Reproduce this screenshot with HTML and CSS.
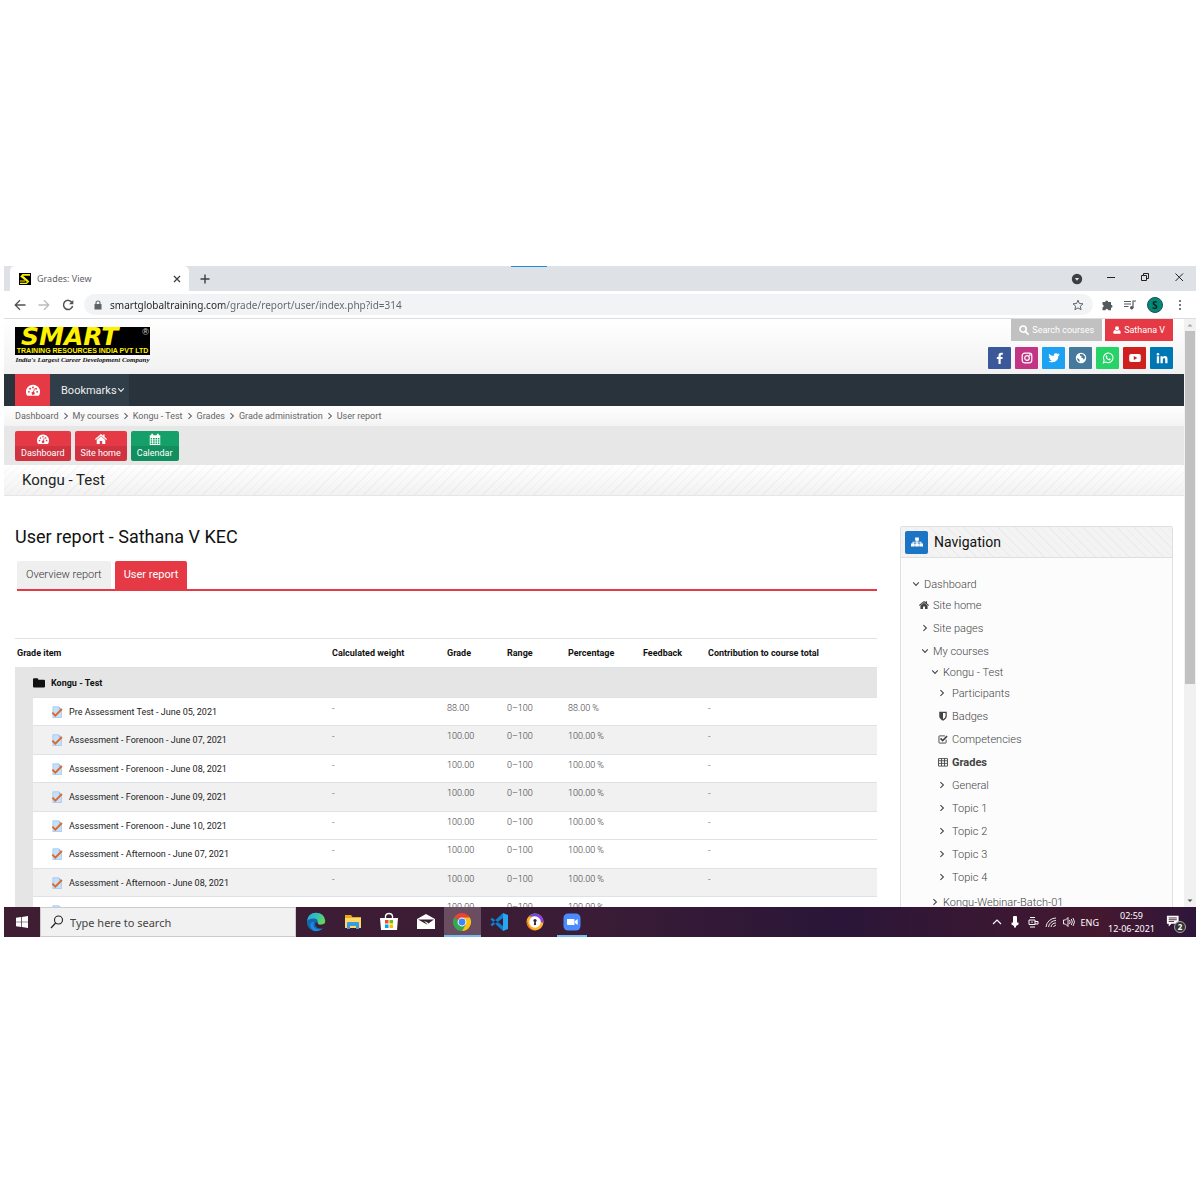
FILE: index.html
```html
<!DOCTYPE html>
<html lang="en">
<head>
<meta charset="utf-8">
<title>Grades: View</title>
<link rel="stylesheet" href="styles.css">
</head>
<body>
<svg class="sprite" aria-hidden="true">
  <symbol id="gauge" viewBox="0 0 16 16"><path fill-rule="evenodd" d="M8 2a8 8 0 0 0-6.800 12.200q.2.300.6.300h12.400q.4 0 .6-.3A8 8 0 0 0 8 2zM3.300 9a1.100 1.100 0 1 1 0 2.200a1.100 1.100 0 0 1 0-2.200zM4.700 5.500a1.100 1.100 0 1 1 0 2.200a1.100 1.100 0 0 1 0-2.200zM8 3.900a1.100 1.100 0 1 1 0 2.200a1.100 1.100 0 0 1 0-2.200zM11.500 5.500a1.100 1.100 0 1 1 0 2.200a1.100 1.100 0 0 1 0-2.200zM12.800 9a1.100 1.100 0 1 1 0 2.200a1.100 1.100 0 0 1 0-2.200zM9.200 6.200l.9.300-1 3.800a1.700 1.700 0 1 1-.9-.3z"/></symbol>
  <symbol id="home" viewBox="0 0 16 16"><path d="M8 4.300l5.700 4.900V14.500H9.600v-4H6.400v4H2.300V9.200zM8 1.400l2.800 2.300V2.100h2v3.300L16 8.100l-1 1.300L8 3.500 1 9.400 0 8.100z"/></symbol>
  <symbol id="calendar" viewBox="0 0 16 16"><path fill-rule="evenodd" d="M1 3h2V1h2.500v2h5V1H13v2h2v13H1zM2.200 6.500v2h2v-2zm3.200 0v2h2.200v-2zm3.300 0v2h2.200v-2zm3.300 0v2h1.900v-2zM2.200 9.600v2h2v-2zm3.200 0v2h2.200v-2zm3.300 0v2h2.200v-2zm3.300 0v2h1.900v-2zM2.200 12.700v2.100h2v-2.100zm3.200 0v2.100h2.200v-2.100zm3.300 0v2.100h2.200v-2.100zm3.300 0v2.100h1.900v-2.100z"/></symbol>
  <symbol id="search" viewBox="0 0 16 16"><circle cx="6.500" cy="6.500" r="5" fill="none" stroke="currentColor" stroke-width="2.600"/><path d="M10.500 10.500l4 4" stroke="currentColor" stroke-width="3" stroke-linecap="round"/></symbol>
  <symbol id="user" viewBox="0 0 16 16"><circle cx="8" cy="4.500" r="4"/><path d="M4 8q4 2.500 8 0 3.500 .5 3.500 5.500 0 2-2 2h-11q-2 0-2-2 0-5 3.500-5.500z"/></symbol>
  <symbol id="chev-r" viewBox="0 0 10 10"><path d="M3 1.500L6.800 5 3 8.500" fill="none" stroke="currentColor" stroke-width="1.300"/></symbol>
  <symbol id="chev-d" viewBox="0 0 10 10"><path d="M1.500 3L5 6.800 8.500 3" fill="none" stroke="currentColor" stroke-width="1.300"/></symbol>
  <symbol id="folder" viewBox="0 0 16 16"><path d="M0 3q0-1.500 1.500-1.500h4Q7 1.500 7 3v.5h7.500Q16 3.500 16 5v7.500q0 1.500-1.500 1.500h-13Q0 14 0 12.500z"/></symbol>
  <symbol id="quiz" viewBox="0 0 16 16"><path d="M2.500 1h8l3.500 3.500V15.500H2.500z" fill="#c5e0f8" stroke="#8dbdf0" stroke-width=".8"/><path d="M10.500 1v3.500H14z" fill="#8dbdf0"/><path d="M1.800 8.800l4 4L14.500 4" fill="none" stroke="#e0682a" stroke-width="2.600"/></symbol>
  <symbol id="sitemap" viewBox="0 0 16 16"><path d="M5.500 2h5v4.200H8.800v1.300h5.200V10H16v4h-5v-4h1.600V8.800H8.800V10h1.700v4h-5v-4h1.700V8.800H3.400V10H5v4H0v-4h2V7.500h5.200V6.200H5.500z"/></symbol>
  <symbol id="shield" viewBox="0 0 16 16"><path fill-rule="evenodd" d="M2 1h12v7.500q0 4-6 7-6-3-6-7zM8 3v10.200q4-2.200 4-4.700V3z"/></symbol>
  <symbol id="check-sq" viewBox="0 0 16 16"><path d="M13 9v4.500q0 1-1 1H2.500q-1 0-1-1V4q0-1 1-1H11" fill="none" stroke="currentColor" stroke-width="1.500"/><path d="M4 7l3.500 3.500L14.500 3.500" fill="none" stroke="currentColor" stroke-width="2.600"/></symbol>
  <symbol id="grid" viewBox="0 0 16 16"><path d="M.8 2.500h14.400v12H.8zM.8 6h14.400M.8 10.200h14.400M5.600 2.500v12M10.400 2.500v12" fill="none" stroke="currentColor" stroke-width="1.400"/></symbol>
</svg>

<div class="desktop">
  <div class="progress"></div>
  <header class="tabstrip">
    <div class="tab">
      <svg class="favicon" viewBox="0 0 12 12"><path d="M0 0h12v12H0z" fill="#000"/><path d="M11 1.800H4L2.500 3.500l6 4.800" fill="none" stroke="#fff200" stroke-width="1.800"/><path d="M1 10.300h6.500l2-1.800L4 3.500M1 8h5" fill="none" stroke="#fff200" stroke-width="1.200"/></svg>
      <span class="tab-title">Grades: View</span>
      <button class="plain" aria-label="Close tab"><svg class="i8" viewBox="0 0 8 8"><path d="M1 1l6 6M7 1L1 7" stroke="#3c4043" stroke-width="1.300"/></svg></button>
    </div>
    <button class="plain newtab" aria-label="New tab"><svg class="i10" viewBox="0 0 10 10"><path d="M5 .5v9M.5 5h9" stroke="#3c4043" stroke-width="1.400"/></svg></button>
    <div class="win-controls">
      <button class="plain" aria-label="Search tabs"><svg class="i12" viewBox="0 0 12 12"><circle cx="6" cy="6" r="5.200" fill="#3c4043"/><path d="M3.800 5h4.400L6 7.800z" fill="#dee1e6"/></svg></button>
      <button class="plain" aria-label="Minimize"><svg class="i12" viewBox="0 0 12 12"><path d="M2 4.500h8" stroke="#222"/></svg></button>
      <button class="plain" aria-label="Restore"><svg class="i12" viewBox="0 0 12 12"><path d="M2.500 2.500h5v5h-5zM4.500 2.500v-2h5v5h-2" fill="none" stroke="#222"/></svg></button>
      <button class="plain" aria-label="Close"><svg class="i12" viewBox="0 0 12 12"><path d="M2.500.5l7.500 7.500M10 .5L2.500 8" stroke="#222"/></svg></button>
    </div>
  </header>

  <div class="toolbar">
    <button class="plain" aria-label="Back"><svg class="i12" viewBox="0 0 12 12"><path d="M11.500 6H1.500M6 1.200L1.200 6 6 10.800" fill="none" stroke="#4f5357" stroke-width="1.300"/></svg></button>
    <button class="plain" aria-label="Forward"><svg class="i12" viewBox="0 0 12 12"><path d="M.5 6h10M6 1.200L10.800 6 6 10.800" fill="none" stroke="#babcbe" stroke-width="1.300"/></svg></button>
    <button class="plain" aria-label="Reload"><svg class="i12" viewBox="0 0 12 12"><path d="M10 3.500A4.600 4.600 0 1 0 10.600 7" fill="none" stroke="#4f5357" stroke-width="1.500"/><path d="M11.300 1v4.300H7z" fill="#4f5357"/></svg></button>
    <div class="omnibox">
      <svg class="i10" viewBox="0 0 10 10"><path d="M1.500 4h7v5.500h-7z" fill="#5f6368"/><path d="M3 4.500V3a2 2 0 0 1 4 0v1.500" fill="none" stroke="#5f6368" stroke-width="1.100"/></svg>
      <input class="url" type="text" aria-label="Address" value="smartglobaltraining.com/grade/report/user/index.php?id=314">
      <button class="plain" aria-label="Bookmark"><svg class="i12" viewBox="0 0 12 12"><path d="M6 1.200l1.400 3.300 3.600.3-2.700 2.400.8 3.500L6 8.900l-3.100 1.800.8-3.500L1 4.800l3.600-.3z" fill="none" stroke="#5f6368"/></svg></button>
    </div>
    <div class="tools">
      <button class="plain" aria-label="Extensions"><svg class="i12" viewBox="0 0 12 12"><path d="M1.500 3h2.700a1.500 1.500 0 1 1 3 0H10v2.700a1.500 1.500 0 1 1 0 3v2.600H7.400a1.600 1.600 0 0 0-3.100 0H1.500V8.500a1.500 1.500 0 0 0 0-2.900z" fill="#55595d"/></svg></button>
      <button class="plain" aria-label="Media"><svg class="i12" viewBox="0 0 12 12"><path d="M0 2.500h7M0 5h7M0 7.500h4.500M9 9V2h3" fill="none" stroke="#55595d" stroke-width="1.200"/><circle cx="7.700" cy="8.800" r="1.700" fill="#55595d"/></svg></button>
      <button class="avatar" aria-label="Profile">S</button>
      <button class="plain" aria-label="Menu"><svg class="i12" viewBox="0 0 12 12" fill="#55595d"><circle cx="6" cy="2" r="1.100"/><circle cx="6" cy="6" r="1.100"/><circle cx="6" cy="10" r="1.100"/></svg></button>
    </div>
  </div>

  <div class="viewport">
    <div class="page">
      <div class="masthead">
        <a class="logo" href="#">
          <span class="logo-box"><span class="logo-name">SMART<sup>®</sup></span><span class="logo-sub">TRAINING RESOURCES INDIA PVT LTD</span></span>
          <span class="logo-tag">India's Largest Career Development Company</span>
        </a>
        <div class="head-right">
          <div class="head-links">
            <a class="chip chip-grey" href="#"><svg class="i10"><use href="#search"/></svg>Search courses</a>
            <a class="chip chip-red" href="#"><svg class="i8"><use href="#user"/></svg>Sathana V</a>
          </div>
          <div class="social">
            <a class="fb" href="#" aria-label="Facebook"><svg viewBox="0 0 12 12"><path d="M8.800.8v2H7.600q-.9 0-.9.900v1.200h2L8.400 7H6.700v5H4.500V7H2.800V4.900h1.700V3.400Q4.500.7 7.200.7z" fill="#fff"/></svg></a>
            <a class="ig" href="#" aria-label="Instagram"><svg viewBox="0 0 12 12" fill="none" stroke="#fff" stroke-width="1.200"><rect x="1.200" y="1.200" width="9.600" height="9.600" rx="2.500"/><circle cx="6" cy="6" r="2.300"/><circle cx="8.800" cy="3.200" r=".3"/></svg></a>
            <a class="tw" href="#" aria-label="Twitter"><svg viewBox="0 0 12 12"><path d="M11.600 2.700q-.5.700-1.200 1.200 0 3-2.300 5Q6 10.500 3.400 10.300 1.700 10.200.3 9.300q1.900.1 3.300-.9-1.600-.2-2.100-1.600h1Q.7 6.200.7 4.400q.5.300 1 .3Q.1 3.400 1 1.700q2 2.300 4.800 2.400-.4-1.600.8-2.500 1.800-1 3 .3.800-.2 1.500-.6-.3.800-1 1.300.8-.1 1.500-.4z" fill="#fff"/></svg></a>
            <a class="web" href="#" aria-label="Website"><svg viewBox="0 0 12 12"><circle cx="6" cy="6" r="5.200" fill="#fff"/><path d="M5 2l3 .3 2 2.400-.3 2-1 1-.8-1.600L6 5.500l.8-1.200L5 3.500zM2 6l2 1 .7 1.500-.5 1.400L2.500 8z" fill="#467a9c"/></svg></a>
            <a class="wa" href="#" aria-label="WhatsApp"><svg viewBox="0 0 12 12"><path d="M1.300 10.800l.8-2.500a4.800 4.800 0 1 1 1.700 1.700z" fill="none" stroke="#fff" stroke-width="1.100"/><path d="M4 3.500l.8-.2.700 1.500-.5.700q.6 1.100 1.700 1.500l.7-.7 1.400.8q0 1.300-1.500 1.300Q4 7.700 3.600 4.600z" fill="#fff"/></svg></a>
            <a class="yt" href="#" aria-label="YouTube"><svg viewBox="0 0 12 12"><path fill-rule="evenodd" d="M2 2h8q1.800 0 1.800 1.800v4.400Q11.800 10 10 10H2Q.2 10 .2 8.200V3.800Q.2 2 2 2zm2.800 2v4l3.500-2z" fill="#fff"/></svg></a>
            <a class="li" href="#" aria-label="LinkedIn"><svg viewBox="0 0 12 12" fill="#fff"><path d="M.8 4.300h2.300v6.900H.8zM4.500 4.300h2.200v1q.7-1.200 2.200-1.200 2.600 0 2.600 3v4.100H9.200V7.500q0-1.500-1.100-1.500-1.300 0-1.300 1.600v3.600H4.500z"/><circle cx="1.950" cy="2.200" r="1.300"/></svg></a>
          </div>
        </div>
      </div>

      <nav class="mainnav" aria-label="Main">
        <a class="nav-home" href="#" aria-label="Dashboard"><svg class="i14"><use href="#gauge"/></svg></a>
        <button class="nav-item">Bookmarks<svg class="i8"><use href="#chev-d"/></svg></button>
      </nav>

      <nav class="crumbs" aria-label="Breadcrumb">
        <a href="#">Dashboard</a><svg class="i8"><use href="#chev-r"/></svg><a href="#">My courses</a><svg class="i8"><use href="#chev-r"/></svg><a href="#">Kongu - Test</a><svg class="i8"><use href="#chev-r"/></svg><a href="#">Grades</a><svg class="i8"><use href="#chev-r"/></svg><a href="#">Grade administration</a><svg class="i8"><use href="#chev-r"/></svg><a href="#">User report</a>
      </nav>

      <div class="quick">
        <a class="tile red" href="#"><svg class="i12"><use href="#gauge"/></svg><span>Dashboard</span></a>
        <a class="tile red" href="#"><svg class="i12"><use href="#home"/></svg><span>Site home</span></a>
        <a class="tile green" href="#"><svg class="i12"><use href="#calendar"/></svg><span>Calendar</span></a>
      </div>

      <h1 class="course">Kongu - Test</h1>

      <div class="columns">
        <main>
          <h2>User report - Sathana V KEC</h2>
          <nav class="tabs" aria-label="Reports"><a href="#">Overview report</a><a class="active" href="#">User report</a></nav>
          <table class="grades">
            <colgroup><col class="c-pad"><col class="c-item"><col class="c-weight"><col class="c-grade"><col class="c-range"><col class="c-pct"><col class="c-fb"><col></colgroup>
            <thead><tr><th colspan="2">Grade item</th><th>Calculated weight</th><th>Grade</th><th>Range</th><th>Percentage</th><th>Feedback</th><th>Contribution to course total</th></tr></thead>
            <tbody>
              <tr class="cat"><td></td><th colspan="7"><span class="item"><svg class="i12"><use href="#folder"/></svg>Kongu - Test</span></th></tr>
              <tr><td class="gut"></td><td><a class="item" href="#"><svg class="i12"><use href="#quiz"/></svg>Pre Assessment Test - June 05, 2021</a></td><td>-</td><td>88.00</td><td>0–100</td><td>88.00 %</td><td></td><td>-</td></tr>
              <tr class="alt"><td class="gut"></td><td><a class="item" href="#"><svg class="i12"><use href="#quiz"/></svg>Assessment - Forenoon - June 07, 2021</a></td><td>-</td><td>100.00</td><td>0–100</td><td>100.00 %</td><td></td><td>-</td></tr>
              <tr><td class="gut"></td><td><a class="item" href="#"><svg class="i12"><use href="#quiz"/></svg>Assessment - Forenoon - June 08, 2021</a></td><td>-</td><td>100.00</td><td>0–100</td><td>100.00 %</td><td></td><td>-</td></tr>
              <tr class="alt"><td class="gut"></td><td><a class="item" href="#"><svg class="i12"><use href="#quiz"/></svg>Assessment - Forenoon - June 09, 2021</a></td><td>-</td><td>100.00</td><td>0–100</td><td>100.00 %</td><td></td><td>-</td></tr>
              <tr><td class="gut"></td><td><a class="item" href="#"><svg class="i12"><use href="#quiz"/></svg>Assessment - Forenoon - June 10, 2021</a></td><td>-</td><td>100.00</td><td>0–100</td><td>100.00 %</td><td></td><td>-</td></tr>
              <tr><td class="gut"></td><td><a class="item" href="#"><svg class="i12"><use href="#quiz"/></svg>Assessment - Afternoon - June 07, 2021</a></td><td>-</td><td>100.00</td><td>0–100</td><td>100.00 %</td><td></td><td>-</td></tr>
              <tr class="alt"><td class="gut"></td><td><a class="item" href="#"><svg class="i12"><use href="#quiz"/></svg>Assessment - Afternoon - June 08, 2021</a></td><td>-</td><td>100.00</td><td>0–100</td><td>100.00 %</td><td></td><td>-</td></tr>
              <tr><td class="gut"></td><td><a class="item" href="#" aria-label="Assessment"><svg class="i12"><use href="#quiz"/></svg></a></td><td></td><td>100.00</td><td>0–100</td><td>100.00 %</td><td></td><td></td></tr>
            </tbody>
          </table>
        </main>

        <aside class="block">
          <h3><span class="block-icon"><svg class="i12"><use href="#sitemap"/></svg></span>Navigation</h3>
          <ul class="tree">
            <li class="short"><a href="#"><svg class="i8"><use href="#chev-d"/></svg>Dashboard</a></li>
            <li class="l1"><a href="#"><svg class="i10"><use href="#home"/></svg>Site home</a></li>
            <li class="l1 fold"><a href="#"><svg class="i8"><use href="#chev-r"/></svg>Site pages</a></li>
            <li class="l1 fold short"><a href="#"><svg class="i8"><use href="#chev-d"/></svg>My courses</a></li>
            <li class="l2 short"><a href="#"><svg class="i8"><use href="#chev-d"/></svg>Kongu - Test</a></li>
            <li class="l3 fold"><a href="#"><svg class="i8"><use href="#chev-r"/></svg>Participants</a></li>
            <li class="l3"><a href="#"><svg class="i10"><use href="#shield"/></svg>Badges</a></li>
            <li class="l3"><a href="#"><svg class="i10"><use href="#check-sq"/></svg>Competencies</a></li>
            <li class="l3 here"><a href="#"><svg class="i10"><use href="#grid"/></svg>Grades</a></li>
            <li class="l3 fold"><a href="#"><svg class="i8"><use href="#chev-r"/></svg>General</a></li>
            <li class="l3 fold"><a href="#"><svg class="i8"><use href="#chev-r"/></svg>Topic 1</a></li>
            <li class="l3 fold"><a href="#"><svg class="i8"><use href="#chev-r"/></svg>Topic 2</a></li>
            <li class="l3 fold"><a href="#"><svg class="i8"><use href="#chev-r"/></svg>Topic 3</a></li>
            <li class="l3 fold"><a href="#"><svg class="i8"><use href="#chev-r"/></svg>Topic 4</a></li>
            <li class="l2 last"><a href="#"><svg class="i8"><use href="#chev-r"/></svg>Kongu-Webinar-Batch-01</a></li>
          </ul>
        </aside>
      </div>
    </div>
    <div class="scrollbar" aria-hidden="true">
      <svg viewBox="0 0 12 12"><path d="M3.500 7.500h5L6 5z" fill="#a3a3a3"/></svg>
      <div class="thumb"></div>
      <svg class="down" viewBox="0 0 12 12"><path d="M3.500 4.500h5L6 7z" fill="#505050"/></svg>
    </div>
  </div>

  <footer class="taskbar">
    <button class="start" aria-label="Start"><svg class="i12" viewBox="0 0 12 12" fill="#fff"><path d="M0 1.800l5.300-.8v4.700H0zM6 .9L12 0v5.700H6zM0 6.300h5.300V11L0 10.200zM6 6.300h6V12l-6-.9z"/></svg></button>
    <label class="search"><svg class="i14" viewBox="0 0 14 14"><circle cx="8.500" cy="5" r="4" fill="none" stroke="#222" stroke-width="1.100"/><path d="M5.600 8L1 13" stroke="#222" stroke-width="1.200"/></svg><input type="text" placeholder="Type here to search" aria-label="Type here to search"></label>
    <div class="apps">
      <button aria-label="Edge"><svg viewBox="0 0 20 20"><defs><linearGradient id="eg" x1="0" y1="0" x2="1" y2=".4"><stop offset="0" stop-color="#28a8d8"/><stop offset=".6" stop-color="#35c3b3"/><stop offset="1" stop-color="#62d657"/></linearGradient></defs><circle cx="10" cy="10" r="9.200" fill="#1267b4"/><path d="M1 9Q2 1 10 .8q8 .2 9.200 7.700.2 4.300-4.700 4.300-3 0-2.800-2 .7-3.400-3-4.300Q3 6 1 9z" fill="url(#eg)"/><path d="M8 10q-2 5 2.500 7 4 1 6.800-1Q13 20.500 7.500 18.500 3.500 16 4.500 12 5.500 9.800 8 10z" fill="#1a8ce0"/><path d="M11.700 10.800q-.2 2 2.800 2 2.400 0 3.800-1.200l1 1.400-1.800 3q-5.500 1.800-8-2-.7-2 .3-3.800z" fill="#3c1d33"/></svg></button>
      <button aria-label="File Explorer"><svg viewBox="0 0 20 20"><path d="M2 3h6l1.500 2H18v11H2z" fill="#e9a820"/><path d="M2 6h16v10H2z" fill="#ffd968"/><path d="M5 10h10q1 0 1 1v6h-3v-3H7v3H4v-6q0-1 1-1z" fill="#3c9be0"/></svg></button>
      <button aria-label="Store"><svg viewBox="0 0 20 20"><path d="M1 6h18l-1 12H2z" fill="#fff"/><path d="M6.500 6V4Q7 1.500 10 1.500T13.500 4v2" fill="none" stroke="#fff" stroke-width="1.300"/><path d="M6 8h3.500v3.500H6z" fill="#f25022"/><path d="M10.500 8H14v3.500h-3.500z" fill="#7fba00"/><path d="M6 12.500h3.500V16H6z" fill="#00a4ef"/><path d="M10.500 12.500H14V16h-3.500z" fill="#ffb900"/></svg></button>
      <button aria-label="Mail"><svg viewBox="0 0 20 20"><path d="M1 7l9-5 9 5v10H1z" fill="#fff"/><path d="M2 7.500h16l-7 5z" fill="#3c1d33"/><path d="M8 9l3 3 3 2.500-2.500-4z" fill="#fff"/></svg></button>
      <button class="open current" aria-label="Chrome"><svg viewBox="0 0 20 20"><path d="M10 10L2.200 5.500A9 9 0 0 1 17.800 5.500z" fill="#ea4335"/><path d="M2.200 5.500A9 9 0 0 0 10 19l4-6.700L10 10z" fill="#34a853"/><path d="M17.800 5.500A9 9 0 0 1 10 19l4-7-2-6.500z" fill="#fbc116"/><circle cx="10" cy="10" r="4.400" fill="#fff"/><circle cx="10" cy="10" r="3.400" fill="#4285f4"/></svg></button>
      <button aria-label="Visual Studio Code"><svg viewBox="0 0 20 20"><path d="M14 1l5 2v14l-5 2z" fill="#2aa5f0"/><path d="M14 1L1.500 12.500 3 14.300 14 6zM14 19L1.500 7.500 3 5.700 14 14z" fill="#0f7fcc"/></svg></button>
      <button aria-label="Secure browser"><svg viewBox="0 0 20 20"><circle cx="10" cy="10" r="8.500" fill="#fdb52a"/><path d="M10 1.500a8.500 8.500 0 0 1 8.400 9.500L10 8z" fill="#8a3ff0"/><path d="M3.500 4.500A8.500 8.500 0 0 1 10 1.500l4 3z" fill="#5a4ee8"/><path d="M2 7q1 10 8 11.500Q1 18 2 7z" fill="#f25a22"/><circle cx="10" cy="10" r="5.800" fill="#fff"/><circle cx="10" cy="8.500" r="1.600" fill="#33243c"/><path d="M9.300 9h1.400l.4 4H8.900z" fill="#33243c"/></svg></button>
      <button class="open" aria-label="Zoom"><svg viewBox="0 0 20 20"><rect x="1.500" y="1.500" width="17" height="17" rx="4.500" fill="#4a8cff"/><path d="M5 7h6.500q1 0 1 1v5H6q-1 0-1-1zM13 9l2.700-2v6L13 11z" fill="#fff"/></svg></button>
    </div>
    <div class="tray">
      <svg class="i12" viewBox="0 0 12 12"><path d="M2 8l4-4 4 4" fill="none" stroke="#fff" stroke-width="1.100"/></svg>
      <svg class="i12" viewBox="0 0 12 12" fill="#fff"><rect x="4" y="0" width="4" height="8" rx="1"/><path d="M2.500 6.500h7v2L7 10v1.500H5V10L2.500 8.500z"/></svg>
      <svg class="i12" viewBox="0 0 12 12" fill="none" stroke="#fff"><path d="M3 1.500h5M2 4h6v4.500H2zM8 5.500h3V8H8M3 11h5M5 5.500v1.500"/></svg>
      <svg class="i12" viewBox="0 0 12 12" fill="none" stroke="#fff" stroke-width=".9"><path d="M1 11A10 10 0 0 1 11 2M3.500 11A7.500 7.500 0 0 1 11 4.500M6 11a5 5 0 0 1 5-4M8.500 11q.5-1.500 2.500-1.800"/></svg>
      <svg class="i12" viewBox="0 0 12 12" fill="none" stroke="#fff" stroke-width=".9"><path d="M.5 4h2L5 1.500v9L2.500 8h-2zM6.500 4q1.300 2 0 4M8.300 3q2 3 0 6M10 2q3 4 0 8"/></svg>
      <span class="lang">ENG</span>
      <span class="clock"><time>02:59</time><time>12-06-2021</time></span>
      <span class="notes"><svg viewBox="0 0 20 20"><path d="M1 3h13v9H6l-3 3v-3H1z" fill="#fff"/><path d="M3 5.500h9M3 7.500h9M3 9.500h6" stroke="#3c1d33"/></svg><b>2</b></span>
    </div>
  </footer>
</div>
</body>
</html>
```
FILE: styles.css
```css
* { box-sizing: border-box; }
body { margin: 0; padding: 266px 4px 0; background: #fff; font-family: Roboto, "Liberation Sans", sans-serif; font-weight: 300; color: #333; }
a { color: inherit; text-decoration: none; }
button { font: inherit; color: inherit; border: 0; padding: 0; margin: 0; background: none; display: flex; align-items: center; justify-content: center; }
input { border: 0; padding: 0; margin: 0; background: none; font: inherit; min-width: 0; }
svg { display: block; flex: none; }
svg:not([fill]) { fill: currentColor; }
.sprite { display: none; }
.i8 { width: 8px; height: 8px; }
.i10 { width: 10px; height: 10px; }
.i12 { width: 12px; height: 12px; }
.i14 { width: 14px; height: 14px; }

.desktop { position: relative; display: flex; flex-direction: column; aspect-ratio: 1192 / 671; }
.progress { position: absolute; top: 0; left: 507px; width: 36px; height: 1px; background: #1c8fe0; }

/* Browser frame */
.tabstrip, .toolbar, .taskbar { font-family: "Noto Sans", "Open Sans", sans-serif; font-weight: 400; }
.tabstrip { flex: none; display: flex; align-items: center; height: 25px; padding-left: 6px; background: #dee1e6; }
.tab { display: flex; align-items: center; align-self: stretch; width: 179px; padding: 0 8px 0 9px; background: #fff; border-radius: 5px 5px 0 0; font-size: 9px; color: #5f6368; }
.favicon { width: 12px; height: 12px; margin-right: 6px; }
.tab-title { flex: 1; }
.newtab { margin-left: 11px; }
.win-controls { margin-left: auto; display: flex; gap: 22px; padding-right: 11px; }
.toolbar { flex: none; display: flex; align-items: center; height: 28px; padding: 0 10px; gap: 12px; border-bottom: 1px solid #dcdde0; }
.omnibox { flex: 1; display: flex; align-items: center; height: 21px; margin-left: -2px; padding: 0 9px 0 9px; gap: 7px; border-radius: 11px; background: #f1f3f4; }
.url { flex: 1; font-size: 10px; color: transparent; background: linear-gradient(90deg, #202124 115px, #5f6368 115px); -webkit-background-clip: text; background-clip: text; }
.tools { display: flex; align-items: center; gap: 11px; margin-left: -4px; }
.avatar { width: 16px; height: 16px; border-radius: 50%; background: #00897b; border: 1px solid #1d4f49; color: #10201e; font-size: 10px; font-weight: 700; }

.viewport { flex: 1; min-height: 0; display: flex; overflow: hidden; }
.page { flex: 1; min-width: 0; }
.scrollbar { width: 12px; display: flex; flex-direction: column; background: #f1f1f1; }
.thumb { flex: 0 0 60%; margin: 0 1px; background: #c1c1c1; }
.down { margin-top: auto; }

/* Site header */
.masthead { display: flex; justify-content: space-between; height: 55px; padding: 0 11px; background: linear-gradient(#fff, #f1f1f1); }
.logo { margin-top: 8px; width: 135px; color: #111; white-space: nowrap; }
.logo-box { display: flex; flex-direction: column; height: 28px; background: #000; color: #fff200; }
.logo-name { display: flex; justify-content: space-between; padding: 0 1px 0 6px; font: italic 700 25px/20px "DejaVu Sans", sans-serif; }
.logo-name sup { font: 400 9px/10px "Liberation Sans", sans-serif; color: #ddd; }
.logo-sub { font: 700 7px/8px "Liberation Sans", sans-serif; text-align: center; }
.logo-tag { display: block; font: italic 700 7px/10px "Liberation Serif", serif; text-align: center; }
.head-right { display: flex; flex-direction: column; align-items: flex-end; gap: 6px; }
.head-links { display: flex; gap: 3px; }
.chip { display: flex; align-items: center; gap: 3px; height: 22px; padding: 0 8px; color: #fff; font-size: 9px; font-weight: 400; }
.chip-grey { background: #c1c1c1; }
.chip-red { background: #e63946; }
.social { display: flex; gap: 4px; }
.social a { display: grid; place-items: center; width: 23px; height: 22px; border-radius: 1px; }
.social svg { width: 12px; height: 12px; }
.fb { background: #3b5998; }
.ig { background: #c13584; }
.tw { background: #1da1f2; }
.web { background: #467a9c; }
.wa { background: #25d366; }
.yt { background: #cd201f; }
.li { background: #0077b5; }

.mainnav { display: flex; height: 32px; padding-left: 11px; background: #29333c; color: #fff; }
.nav-home { display: grid; place-items: center; width: 35px; background: #e63946; }
.nav-item { padding: 0 4px 0 11px; background: #2f3e48; font-size: 11px; font-weight: 400; color: #eee; }
.crumbs { display: flex; align-items: center; gap: 3px; height: 20px; padding-left: 11px; background: linear-gradient(#fff, #f3f3f3); font-size: 9px; font-weight: 400; color: #666; }
.quick { display: flex; align-items: center; gap: 4px; height: 39px; padding-left: 11px; background: #e7e7e7; }
.tile { display: flex; flex-direction: column; align-items: center; justify-content: space-between; height: 30px; padding: 2px 6px; border-radius: 2px; color: #fff; font-size: 9px; line-height: 12px; font-weight: 400; }
.red { background: linear-gradient(#e63946 50%, #cf3340 50%); }
.green { background: linear-gradient(#15a06a 50%, #138f5f 50%); }
.course { margin: 0; height: 31px; padding-left: 18px; border-bottom: 1px solid #e6e6e6; background: repeating-linear-gradient(135deg, transparent 0 5px, rgba(0,0,0,.03) 5px 6px), linear-gradient(#fff, #f2f2f2); font-size: 15px; line-height: 30px; font-weight: 400; color: #222; }

/* Report */
.columns { display: flex; gap: 23px; padding: 30px 11px 0; }
main { flex: 1; min-width: 0; }
h2 { margin: 0; font-size: 18px; line-height: 22px; font-weight: 400; color: #111; }
.tabs { display: flex; gap: 4px; margin: 13px 0 47px 2px; border-bottom: 2px solid #e63946; }
.tabs a { padding: 0 9px; line-height: 28px; font-size: 11px; background: #efefef; border-radius: 2px 2px 0 0; }
.tabs .active { background: #e63946; color: #fff; font-weight: 400; }
.grades { width: 100%; table-layout: fixed; border-collapse: separate; border-spacing: 0; font-size: 9px; line-height: 12px; color: #333; }
.grades th { text-align: left; font-weight: 700; color: #111; }
.grades th, .grades td { padding: 0 2px; border-top: 1px solid #dee2e6; white-space: nowrap; }
.grades thead th { height: 29px; }
.grades .cat { height: 30px; background: #e5e5e5; }
.grades tbody tr { height: 29px; }
.grades tbody tr:nth-child(even) { height: 28px; }
.grades td { vertical-align: top; padding-top: 4px; }
.grades td:nth-child(2) { vertical-align: middle; padding: 0 2px 0 18px; }
.grades .gut, .grades .cat td { background: #e5e5e5; border-color: #e5e5e5; }
.cat th .item { padding: 0; margin-left: -2px; }
.item { display: flex; align-items: center; gap: 6px; font-weight: 400; color: #222; }
.cat .item { font-weight: 700; color: #111; }
.alt { background: #f1f1f1; }
.c-pad { width: 18px; }
.c-item { width: 297px; }
.c-weight { width: 115px; }
.c-grade { width: 60px; }
.c-range { width: 61px; }
.c-pct { width: 75px; }
.c-fb { width: 65px; }

/* Navigation block */
.block { flex: none; width: 273px; border: 1px solid #dee0e2; background: #fcfcfc; border-radius: 2px; }
.block h3 { display: flex; align-items: center; gap: 6px; margin: 0; height: 31px; padding-left: 4px; border-bottom: 1px solid #dcdee0; background: repeating-linear-gradient(45deg, #f3f3f3 0 5px, #ececec 5px 6px); font-size: 14px; font-weight: 400; color: #111; }
.block-icon { display: grid; place-items: center; width: 23px; height: 23px; border-radius: 2px; background: #1b75c4; color: #fff; }
.tree { margin: 0; padding: 15px 0 0 11px; list-style: none; font-size: 11px; }
.tree li { height: 23px; }
.tree .short { height: 21px; }
.tree a { display: flex; align-items: center; gap: 4px; height: 22px; color: #444; }
.tree .l1 { padding-left: 7px; }
.tree .l2 { padding-left: 19px; }
.tree .l3 { padding-left: 26px; }
.tree .l1.fold { padding-left: 9px; }
.tree .l3.fold { padding-left: 26px; }
.tree .l3.fold a { gap: 6px; }
.tree .here { font-weight: 700; }
.tree .last { padding-top: 2px; }

/* Taskbar */
.taskbar { flex: none; display: flex; height: 30px; background: linear-gradient(90deg, #3f1e33, #3a1c36 50%, #2a1638 70%, #44182f 92%, #2e163a); color: #fff; }
.start { width: 36px; }
.search { display: flex; align-items: center; gap: 6px; width: 256px; padding-left: 9px; background: #f1f1f1; border: 1px solid #ccc; }
.search input { flex: 1; font-size: 11px; }
.search input::placeholder { color: #444; opacity: 1; }
.apps { display: grid; grid-template-columns: repeat(8, 1fr); width: 292px; margin-left: 2px; }
.apps svg { width: 20px; height: 20px; }
.apps .open { border-bottom: 2px solid #76b9ed; padding-top: 2px; margin: 0 3px; }
.apps .current { background: #6a4d60; margin: 0; }
.tray { margin-left: auto; display: flex; align-items: center; gap: 6px; padding-right: 12px; font-size: 9px; }
.clock { display: grid; justify-items: center; line-height: 13px; margin: 0 5px 0 3px; }
.notes { position: relative; }
.notes svg { width: 18px; height: 20px; }
.notes b { position: absolute; right: -2px; bottom: -1px; width: 12px; height: 12px; border-radius: 50%; border: 1px solid #aaa; background: #333; font-size: 8px; line-height: 10px; text-align: center; }
```
